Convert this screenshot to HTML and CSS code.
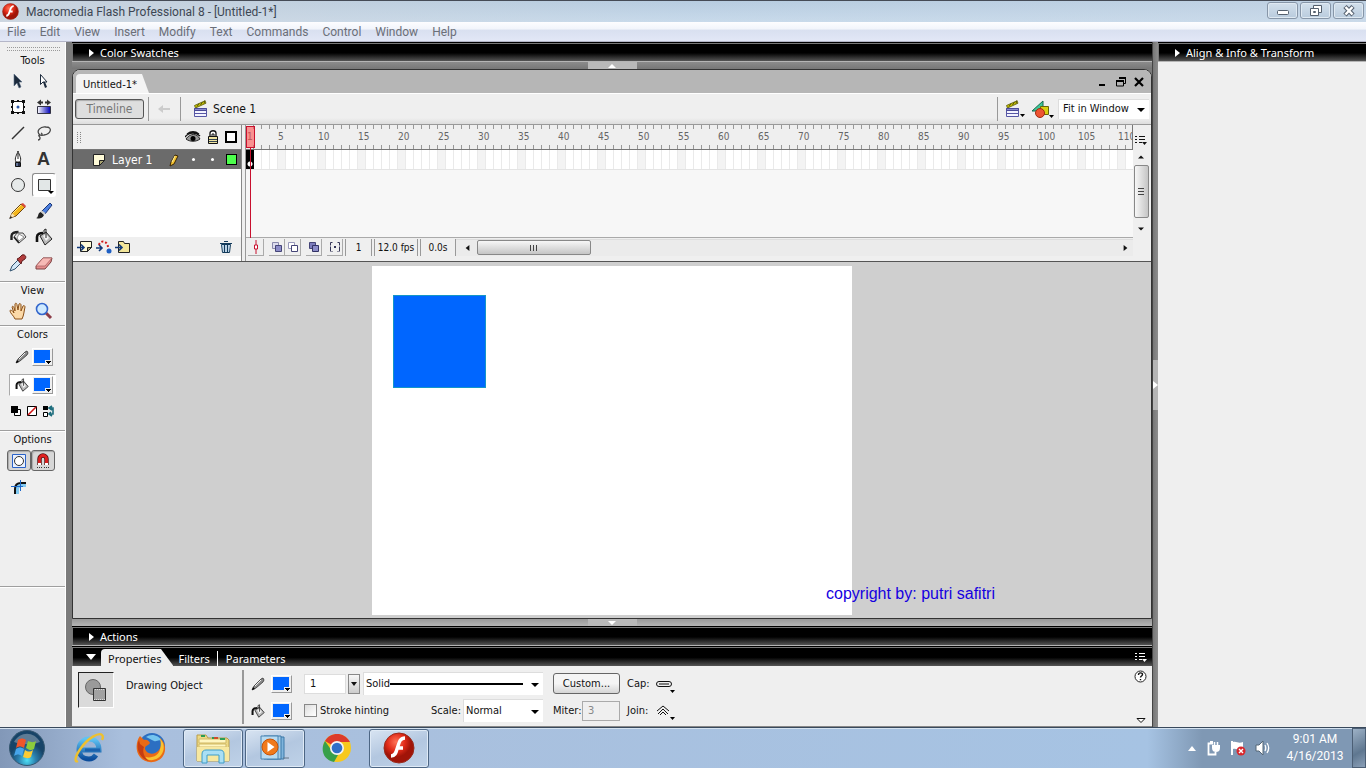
FILE: index.html
```html
<!DOCTYPE html>
<html lang="en">
<head>
	<meta charset="UTF-8">
	<meta name="viewport" content="width=device-width, initial-scale=1">
	<title>Macromedia Flash Professional 8 - [Untitled-1*]</title>
	<link rel="stylesheet" href="styles.css">
</head>
<body>

<!-- shared shapes -->
<svg class="defs" width="0" height="0" aria-hidden="true">
	<defs>
		<radialGradient id="gRed" cx="40%" cy="30%"><stop offset="0" stop-color="#ff7458"/><stop offset=".6" stop-color="#e02a18"/><stop offset="1" stop-color="#a01408"/></radialGradient>
		<radialGradient id="gOrb" cx="50%" cy="85%"><stop offset="0" stop-color="#4fe0f5"/><stop offset=".5" stop-color="#2a7fae"/><stop offset="1" stop-color="#174468"/></radialGradient>
		<linearGradient id="gBlue"><stop offset="0" stop-color="#fff"/><stop offset="1" stop-color="#0000b8"/></linearGradient>
		<linearGradient id="gIe" x2="0" y2="1"><stop offset="0" stop-color="#5fc4f4"/><stop offset="1" stop-color="#0c4d9c"/></linearGradient>
	</defs>
	<symbol id="flash" viewBox="0 0 32 32">
		<circle cx="16" cy="16" r="15" fill="url(#gRed)" stroke="#9a2a1c"/>
		<path d="M22 6c-6 0-6 6-8 11-1 4-2 7-6 7M13 16h7" fill="none" stroke="#fff" stroke-width="3.4"/>
	</symbol>
	<symbol id="pencil" viewBox="0 0 18 18">
		<path d="M1 16l2-5L12 2l4 3-9 9z" fill="#f3b51b" stroke="#6d4310"/>
		<path d="M12 2l2-1 3 3-1 2z" fill="#d94b3c"/>
		<path d="M1 16l2-5 3 3z" fill="#f7e2b5"/><path d="M0 17l2-3 1 2z" fill="#222"/>
		<path d="M4 11l8-8" stroke="#ffe88a"/>
	</symbol>
	<symbol id="greypencil" viewBox="0 0 14 14">
		<path d="M1 13l2-4 7-7 2-1 1 2-1 2-7 6z" fill="#8b8b8b" stroke="#333" stroke-width=".8"/><path d="M4 9l6-6" stroke="#eee"/><path d="M1 13l1-3 2 2z"/>
	</symbol>
	<symbol id="bucket" viewBox="0 0 18 18">
		<path d="M2 14V9c0-3 3-4 6-4" fill="none" stroke="#111" stroke-width="2.6"/>
		<path d="M5 8l6-4 6 7-7 6z" fill="#b9b9b9" stroke="#222"/>
		<path d="M8 8l3-2 3 4-3 3z" fill="#f2f2f2"/><path d="M11 10V1l-2 1v4" fill="none" stroke="#222"/>
	</symbol>
	<symbol id="clapper" viewBox="0 0 16 18">
		<path d="M1.500 5.500L12 .8l1 2.400L2.500 8z" fill="#c8c400" stroke="#55550a" stroke-width=".8"/>
		<path d="M4 6.500l2-3M7.500 5l2-3M11 3.500l1-3" stroke="#55550a"/>
		<path d="M1.500 8.500h12v8h-12z" fill="#f4f4ff" stroke="#5757a5"/>
		<path d="M1.500 8.500h12v2h-12z" fill="#8989cf" stroke="#4b4b97"/><path d="M2 13.500h11" stroke="#5757a5"/>
	</symbol>
	<symbol id="menu" viewBox="0 0 12 11">
		<path d="M0 1.500h2M4 1.500h6M0 4.500h2M4 4.500h6M0 7.500h2M4 7.500h3" stroke="currentColor"/><path d="M7 7h5l-2.500 3z" fill="currentColor"/>
	</symbol>
	<symbol id="page" viewBox="0 0 12 12">
		<path d="M.5.500h11v6l-5 5h-6z" fill="#fffbd8" stroke="#222"/><path d="M11.500 6.500h-5v5z" fill="#a9a472" stroke="#222"/>
	</symbol>
</svg>

<header class="titlebar">
	<svg class="app-icon" width="17" height="17"><use href="#flash"/></svg>
	<h1>Macromedia Flash Professional 8 - [Untitled-1*]</h1>
	<div class="win-buttons">
		<button aria-label="Minimize"><svg width="14" height="12"><rect x="1.500" y="5.500" width="11" height="4" rx="1" fill="#fff" stroke="#55606e"/></svg></button>
		<button aria-label="Restore"><svg width="14" height="12" fill="#fff" stroke="#55606e"><path d="M4.500.5h8v7h-8z"/><path d="M1.500 3.500h8v7h-8z"/><path d="M4.500 6.500h2v1h-2z"/></svg></button>
		<button aria-label="Close"><svg width="14" height="12"><path d="M3 1.500L11 10M11 1.500L3 10" stroke="#55606e" stroke-width="4.500"/><path d="M3.500 2L10.500 9.500M10.500 2L3.500 9.500" stroke="#fff" stroke-width="2.500"/></svg></button>
	</div>
</header>

<nav class="menubar">
	<a href="#">File</a>
	<a href="#">Edit</a>
	<a href="#">View</a>
	<a href="#">Insert</a>
	<a href="#">Modify</a>
	<a href="#">Text</a>
	<a href="#">Commands</a>
	<a href="#">Control</a>
	<a href="#">Window</a>
	<a href="#">Help</a>
</nav>

<div class="workspace">

	<!-- tools -->
	<aside class="tools">
		<div class="grip"></div>
		<section class="tool-group tool-main">
			<h2>Tools</h2>
			<div class="tool-grid">
				<button aria-label="Selection"><svg width="18" height="18"><path d="M5 2v12l3-3 2 5 2-1-2-5h3z" fill="#1c2a3c" stroke="#5b6f86" stroke-width=".6"/></svg></button>
				<button aria-label="Subselection"><svg width="18" height="18"><path d="M5.500 2.500v10l2.500-2.500h4z" fill="#fff" stroke="#1c2a3c"/><path d="M8 10l2 6 2-1-2-5z" fill="#1c2a3c"/></svg></button>
				<button aria-label="Free Transform"><svg width="18" height="18"><path d="M3.500 3.500h11v11h-11z" fill="#fff" stroke="#111"/><path d="M2 2h3v3H2zM13 2h3v3h-3zM2 13h3v3H2zM13 13h3v3h-3zM8 2h2v2H8zM8 14h2v2H8zM2 8h2v2H2zM14 8h2v2h-2z" fill="#111"/><circle cx="9" cy="9" r="1.500" fill="#2a56a8"/></svg></button>
				<button aria-label="Gradient Transform"><svg width="18" height="18"><path d="M2.500 8.500h13v7h-13z" fill="url(#gBlue)" stroke="#334"/><path d="M2 4.500l4-3v2h2v2H6v2zM16 4.500l-4-3v2h-2v2h2v2z" fill="#333"/></svg></button>
				<button aria-label="Line"><svg width="18" height="18"><path d="M3 15L15 3" stroke="#333" stroke-width="1.500"/></svg></button>
				<button aria-label="Lasso"><svg width="18" height="18"><path d="M5 11C0 7 6 2 11 3c7 0 5 7-2 8-3 1-6-1-5 1 2 2 1 4-1 4M5 11c2 1 3-1 1-2" fill="none" stroke="#444" stroke-width="1.300"/></svg></button>
				<button aria-label="Pen"><svg width="18" height="18"><path d="M9 1C8 5 5 8 7 12h4c2-4-1-7-2-11z" fill="#fff" stroke="#222"/><path d="M9 3v6" stroke="#222"/><path d="M6.500 12.500h5v4h-5z" fill="#26304a" stroke="#111"/><path d="M8 13v3" stroke="#9db4dd"/></svg></button>
				<button aria-label="Text" class="text-tool">A</button>
				<button aria-label="Oval"><svg width="18" height="18"><circle cx="9" cy="9" r="6.500" fill="#e6eaea" stroke="#333"/></svg></button>
				<button aria-label="Rectangle" class="active"><svg width="20" height="20"><path d="M4.500 4.500h12v11h-12z" fill="#e2e7e7" stroke="#333"/><path d="M14 16h6l-3 3z"/></svg></button>
				<button aria-label="Pencil"><svg width="18" height="18"><use href="#pencil"/></svg></button>
				<button aria-label="Brush"><svg width="18" height="18"><path d="M7 9l8-8 2 2-7 9z" fill="#4b7fe0" stroke="#1c3676"/><path d="M1 16c3 0 1-5 5-6l3 3c-2 4-5 4-8 3z" fill="#222"/><path d="M6 9l4 3" stroke="#ccc" stroke-width="2"/></svg></button>
				<button aria-label="Ink Bottle"><svg width="18" height="18"><path d="M2.500 12V8c0-3 3-4 7-4" fill="none" stroke="#222" stroke-width="2.400"/><path d="M5 9l3-4h6l3 4-7 6z" fill="#e9e9e9" stroke="#444"/><path d="M10 6l5 3-5 4-2-3z" fill="#fff" stroke="#777" stroke-width=".8"/><path d="M5 9l5 6" stroke="#222" stroke-width="1.800"/></svg></button>
				<button aria-label="Paint Bucket"><svg width="18" height="18"><use href="#bucket"/></svg></button>
				<button aria-label="Eyedropper"><svg width="18" height="18"><path d="M1 17l2-5 6-6 3 3-6 6z" fill="#d2e7f7" stroke="#31536f"/><path d="M8 5l2-1 3-3c3-1 5 2 3 4l-3 2-1 3z" fill="#b33d3d" stroke="#5f1b1b"/></svg></button>
				<button aria-label="Eraser"><svg width="18" height="18"><path d="M1 12l7-8h9l-1 4-6 7H1z" fill="#e58d8d" stroke="#7c4242"/><path d="M1 12h9l7-8H8z" fill="#f6b9b5" stroke="#a45b5b" stroke-width=".7"/></svg></button>
			</div>
		</section>
		<section class="tool-group">
			<h2>View</h2>
			<div class="tool-grid">
				<button aria-label="Hand"><svg width="18" height="18"><path d="M6 17c-1-3-5-6-5-8s3 0 4 2L3 5c1-2 2 0 3 4L6 2c1-2 2 0 2 1l1 5 1-6c1-1 2 0 2 1l0 6 2-5c1-1 2 0 2 1-1 4-1 8-3 12z" fill="#fbd9a8" stroke="#8a4f17"/></svg></button>
				<button aria-label="Zoom"><svg width="18" height="18"><path d="M10 10l6 6" stroke="#8c3c48" stroke-width="3"/><circle cx="7" cy="7" r="5.500" fill="#cfeaff" stroke="#3366cc" stroke-width="1.600"/></svg></button>
			</div>
		</section>
		<section class="tool-group tool-colors">
			<h2>Colors</h2>
			<div class="color-row"><svg width="14" height="14"><use href="#greypencil"/></svg><button class="swatch" aria-label="Stroke color"></button></div>
			<div class="color-row selected"><svg width="14" height="14"><use href="#bucket"/></svg><button class="swatch" aria-label="Fill color"></button></div>
			<div class="mini-row">
				<button aria-label="Black and white"><svg width="12" height="12"><path d="M4.500 4.500h6v6h-6z" fill="#fff" stroke="#000"/><path d="M1 1h7v7H1z"/></svg></button>
				<button aria-label="No color"><svg width="12" height="12"><path d="M1.500 1.500h9v9h-9z" fill="#fff" stroke="#000"/><path d="M2 10l8-8" stroke="#d01616" stroke-width="1.600"/></svg></button>
				<button aria-label="Swap colors"><svg width="14" height="12"><path d="M1 1h5v4H1z"/><path d="M1.500 7.500h4v4h-4z" fill="#fff" stroke="#000"/><path d="M7 3h4v6H8M10 1L7 3l3 2M9 7L7 9l3 2" fill="none" stroke="#1d6d7d" stroke-width="1.600"/></svg></button>
			</div>
		</section>
		<section class="tool-group tool-options">
			<h2>Options</h2>
			<div class="option-row">
				<button class="pressed" aria-label="Object Drawing"><svg width="16" height="16"><path d="M1.500 1.500h13v13h-13z" fill="#e8f0ff" stroke="#2a62c8"/><circle cx="8" cy="8" r="4.500" fill="#fff" stroke="#333"/></svg></button>
				<button class="pressed" aria-label="Snap to Objects"><svg width="16" height="16"><path d="M4.500 12V6a3.500 3.500 0 0 1 7 0v6" fill="none" stroke="#4c0d0d" stroke-width="4.400"/><path d="M4.500 10V6a3.500 3.500 0 0 1 7 0v4" fill="none" stroke="#e02020" stroke-width="2.800"/><path d="M3 11h3M10 11h3" stroke="#fff" stroke-width="2"/><path d="M2 14.500h5M9 14.500h5" stroke="#333" stroke-dasharray="1 1"/></svg></button>
			</div>
			<div class="option-row">
				<button aria-label="Round Rectangle Radius"><svg width="18" height="18"><path d="M5 16v-5c0-4 2-6 6-6h5v4h-5c-1 0-2 1-2 2v5z" fill="#7fc8f0"/><path d="M5 16v-5c0-4 2-6 6-6h5" fill="none" stroke="#111" stroke-width="2"/><path d="M1 8.500h12M10.500 2v11" stroke="#1c67c8"/></svg></button>
			</div>
		</section>
	</aside>

	<!-- document and bottom panels -->
	<main class="center">
		<div class="panel-bar"><button class="expander"><i class="tri-right"></i>Color Swatches</button></div>
		<div class="splitter"><button class="handle" aria-label="Collapse top panels"><i class="tri-up"></i></button></div>

		<div class="document">
			<div class="tabstrip">
				<a href="#" class="doc-tab">Untitled-1*</a>
				<div class="doc-buttons">
					<button aria-label="Minimize document"><svg width="10" height="10"><path d="M1 8h6" stroke="#000" stroke-width="2"/></svg></button>
					<button aria-label="Restore document"><svg width="10" height="10" fill="none" stroke="#000"><path d="M3 1h6.500v5.500H8M1 4h6.500v5H.5V4z"/><path d="M3 1h7M0 4h8" stroke-width="2"/></svg></button>
					<button aria-label="Close document"><svg width="10" height="10"><path d="M1 1l8 8M9 1L1 9" stroke="#000" stroke-width="2.200"/></svg></button>
				</div>
			</div>

			<div class="edit-bar">
				<button class="timeline-btn">Timeline</button>
				<span class="vline"></span>
				<button class="back" aria-label="Back"><svg width="14" height="10"><path d="M1 5l5-4v3h7v2H6v3z" fill="#ccc"/></svg></button>
				<span class="vline"></span>
				<a href="#" class="scene"><svg width="16" height="18"><use href="#clapper"/></svg>Scene 1</a>
				<span class="vline push"></span>
				<button class="drop" aria-label="Edit Scene"><svg width="20" height="18"><use href="#clapper" width="16" height="18"/><path d="M15 14h5l-2.500 3z"/></svg></button>
				<button class="drop" aria-label="Edit Symbols"><svg width="22" height="19"><path d="M0 11L11 1v10z" fill="#3fc79a" stroke="#176b4c"/><path d="M8.500 6.500h8v8h-8z" fill="#d8d010" stroke="#6a660a"/><circle cx="8" cy="13" r="4.500" fill="#ee5533" stroke="#a02a10"/><path d="M17 15h5l-2.500 3z"/></svg></button>
				<span class="select zoom"><select aria-label="Zoom"><option>Fit in Window</option><option>100%</option></select></span>
			</div>

			<div class="timeline">
				<div class="layers">
					<div class="layers-head">
						<span class="dots"></span>
						<svg width="16" height="12"><path d="M1 8c4-6 11-6 14 0-4 3-10 3-14 0z" fill="#999" stroke="#222"/><path d="M0 6c4-5 11-5 15-1M2 3c4-3 8-3 12 0" fill="none" stroke="#111" stroke-width="1.300"/><circle cx="8" cy="7.500" r="2.500"/></svg>
						<svg width="12" height="14"><path d="M3 7V3c0-3 6-3 6 0v4" fill="#fff" stroke="#111" stroke-width="1.300"/><path d="M5 7V4h2v3" fill="none" stroke="#111"/><path d="M1.500 6.500h9v7h-9z" fill="#f0e4a0" stroke="#111"/><path d="M2 9.500h8M2 11.500h8" stroke="#345"/></svg>
						<svg width="12" height="12"><path d="M1 1h10v10H1z" fill="#fff" stroke="#000" stroke-width="2"/></svg>
					</div>
					<div class="layer">
						<svg width="12" height="12"><use href="#page"/></svg>
						<span class="layer-name">Layer 1</span>
						<svg width="12" height="14"><path d="M2 13l1-4 4-7 3 1-4 8z" fill="#f3c233" stroke="#3a2606"/><path d="M4 9l3-6" stroke="#fff2a8"/></svg>
						<b class="dot"></b>
						<b class="dot"></b>
						<span class="outline-color"></span>
					</div>
					<div class="layers-foot">
						<button aria-label="Insert Layer"><svg width="16" height="14"><path d="M3.500 1.500h11v6l-4 4h-7z" fill="#fffbd8" stroke="#222"/><path d="M14.500 7.500h-4v4z" fill="#a9a472" stroke="#222"/><path d="M0 7.500h7M4 4.500l3 3-3 3" fill="none" stroke="#123a7a" stroke-width="1.600"/></svg></button>
						<button aria-label="Add Motion Guide"><svg width="16" height="14"><path d="M3 5c1-5 8-5 9 2" fill="none" stroke="#d01818" stroke-width="2" stroke-dasharray="2 2"/><path d="M0 8h6M3 5l3 3-3 3" fill="none" stroke="#123a7a" stroke-width="1.600"/><circle cx="13" cy="11" r="2.500" fill="#1d5fc4"/></svg></button>
						<button aria-label="Insert Layer Folder"><svg width="16" height="14"><path d="M3.500 1.500h5l1 2h5v9h-11z" fill="#f3e69a" stroke="#222"/><path d="M0 7.500h7M4 4.500l3 3-3 3" fill="none" stroke="#123a7a" stroke-width="1.600"/></svg></button>
						<button class="push" aria-label="Delete Layer"><svg width="12" height="14"><path d="M1.500 4.500h9l-1 8h-7z" fill="#cfe4f5" stroke="#123a5a"/><path d="M0 3.500h12M4 1.500h4M4.500 5v7M7.500 5v7" stroke="#123a5a" stroke-width="1.200"/></svg></button>
					</div>
				</div>

				<div class="frames">
					<div class="playhead"></div>
					<ol class="ruler">
						<li class="first">1</li><li>5</li><li>10</li><li>15</li><li>20</li><li>25</li><li>30</li><li>35</li>
						<li>40</li><li>45</li><li>50</li><li>55</li><li>60</li><li>65</li><li>70</li><li>75</li>
						<li>80</li><li>85</li><li>90</li><li>95</li><li>100</li><li>105</li><li>110</li>
					</ol>
					<div class="frame-row"><span class="keyframe"></span></div>
					<div class="frames-empty"></div>
					<div class="frames-foot">
						<button class="tick" aria-label="Center Frame"><svg width="8" height="14"><path d="M4 0v14" stroke="#c8102e"/><path d="M2.500 5h3v4h-3z" fill="#fff" stroke="#c8102e"/></svg></button>
						<button class="onion" aria-label="Onion Skin"><svg width="12" height="12"><path d="M1.500 1.500h6v6h-6z" fill="#dde" stroke="#88a"/><path d="M4.500 4.500h6v6h-6z" fill="#8c8cc8" stroke="#447"/></svg></button>
						<button aria-label="Onion Skin Outlines"><svg width="12" height="12"><path d="M1.500 1.500h6v6h-6z" fill="#fff" stroke="#99b"/><path d="M4.500 4.500h6v6h-6z" fill="#fff" stroke="#447"/></svg></button>
						<button class="multi" aria-label="Edit Multiple Frames"><svg width="12" height="12"><path d="M1.500 1.500h6v6h-6z" fill="#7c7cbc" stroke="#447"/><path d="M4.500 4.500h6v6h-6z" fill="#8c8cc8" stroke="#336"/></svg></button>
						<button class="markers" aria-label="Modify Onion Markers"><svg width="12" height="12"><path d="M3.500 1.500h-2v9h2M8.500 1.500h2v9h-2" fill="none" stroke="#335" stroke-dasharray="5 1"/><path d="M5 5h2v2H5z" fill="#335"/></svg></button>
						<output class="f-num">1</output>
						<output class="f-fps">12.0 fps</output>
						<output class="f-time">0.0s</output>
						<div class="hscroll">
							<button aria-label="Scroll left"><i class="tri-left"></i></button>
							<button class="thumb" aria-label="Timeline scroll"><i class="ridges"></i></button>
							<button class="push" aria-label="Scroll right"><i class="tri-right"></i></button>
						</div>
					</div>
				</div>

				<div class="vscroll">
					<button class="frame-menu" aria-label="Frame View"><svg width="12" height="11"><use href="#menu"/></svg></button>
					<button aria-label="Scroll up"><i class="tri-up"></i></button>
					<button class="thumb" aria-label="Layer scroll"><i class="ridges"></i></button>
					<button aria-label="Scroll down"><i class="tri-down"></i></button>
				</div>
			</div>

			<div class="stage-area">
				<div class="stage">
					<div class="shape"></div>
					<p class="credit">copyright by: putri safitri</p>
				</div>
			</div>
		</div>

		<div class="splitter bottom"><button class="handle" aria-label="Collapse bottom panels"><i class="tri-down"></i></button></div>
		<div class="panel-bar"><button class="expander"><i class="tri-right"></i>Actions</button></div>
		<div class="panel-bar tabs">
			<button class="expander" aria-label="Collapse Properties"><i class="tri-down"></i></button>
			<a href="#" class="prop-tab">Properties</a>
			<a href="#">Filters</a>
			<a href="#" class="sep">Parameters</a>
			<button class="bar-menu" aria-label="Panel menu"><svg width="12" height="11"><use href="#menu"/></svg></button>
		</div>

		<section class="properties">
			<div class="object-icon"><svg width="28" height="28"><circle cx="10" cy="10" r="7.500" fill="#9a9a9a" stroke="#666"/><path d="M10.500 11.500h12v12h-12z" fill="#ddd" stroke="#333"/><path d="M11 13h11M11 15h11M11 17h11M11 19h11M11 21h11" stroke="#666" stroke-dasharray="1 1"/><path d="M12 14h10M12 16h10M12 18h10M12 20h10M12 22h10" stroke="#666" stroke-dasharray="1 1"/></svg></div>
			<p class="object-name">Drawing Object</p>
			<div class="prop-grid">
				<svg width="14" height="14"><use href="#greypencil"/></svg>
				<button class="swatch" aria-label="Stroke color"></button>
				<div class="field-row">
					<input class="stroke-h" type="text" value="1" aria-label="Stroke height">
					<button class="spin" aria-label="Stroke height slider"><i class="tri-down"></i></button>
					<span class="select line-style"><select aria-label="Stroke style"><option>Solid</option><option>Dashed</option></select></span>
				</div>
				<button class="custom">Custom...</button>
				<div class="cap"><span>Cap:</span><button aria-label="Cap style"><svg width="20" height="18"><rect x=".5" y="6.500" width="15" height="5" rx="2.500" fill="none" stroke="#111"/><path d="M3 9h10" stroke="#111"/><path d="M14 15h5l-2.500 3z"/></svg></button></div>

				<svg width="14" height="14"><use href="#bucket"/></svg>
				<button class="swatch" aria-label="Fill color"></button>
				<div class="field-row">
					<label class="hint"><input type="checkbox">Stroke hinting</label>
					<label class="push" for="scale">Scale:</label>
					<span class="select scale"><select id="scale"><option>Normal</option><option>None</option></select></span>
				</div>
				<div class="miter"><label for="miter">Miter:</label><input id="miter" type="text" value="3" disabled></div>
				<div class="cap"><span>Join:</span><button aria-label="Join style"><svg width="20" height="18"><path d="M1 9l6-5 6 5M2 12l5-5 5 5M4 13l3-3 3 3" fill="none" stroke="#111"/><path d="M14 15h5l-2.500 3z"/></svg></button></div>
			</div>
			<div class="prop-side">
				<button aria-label="Help"><svg width="13" height="13"><circle cx="6.500" cy="6.500" r="5.500" fill="#fff" stroke="#222"/><path d="M4.500 5c0-3 4-2.500 4-.5 0 1.500-2 1.500-2 3M6.500 9v1.300" fill="none" stroke="#111" stroke-width="1.400"/></svg></button>
				<button aria-label="Collapse information area"><svg width="10" height="6"><path d="M1 .5h8L5 4.500z" fill="#fff" stroke="#111"/></svg></button>
			</div>
		</section>
	</main>

	<div class="vsplitter"><button class="handle" aria-label="Collapse side panels"><i class="tri-right"></i></button></div>

	<aside class="dock">
		<div class="panel-bar"><button class="expander"><i class="tri-right"></i>Align &amp; Info &amp; Transform</button></div>
	</aside>
</div>

<footer class="taskbar">
	<button class="start" aria-label="Start"><svg width="38" height="38" viewBox="0 0 38 38"><circle cx="19" cy="19" r="17.500" fill="url(#gOrb)" stroke="#34566f"/><path d="M6 13c6-11 20-11 26 0-8 3-18 3-26 0z" fill="#fff" opacity=".3"/><path d="M10 11c3-2 5-2 8 0l-2 8c-3-2-5-2-8 0z" fill="#f0562a"/><path d="M20 12c3 1 5 2 8 0l-2 8c-3 2-5 1-8-1z" fill="#8ccc3c"/><path d="M8 20c3-2 5-2 8 0l-2 7c-3-2-5-2-8 0z" fill="#47a5ea"/><path d="M17 21c3 2 5 2 8 0l-2 7c-3 2-5 1-8 0z" fill="#fbcb34"/></svg></button>
	<button class="task" aria-label="Internet Explorer"><svg width="32" height="32" viewBox="0 0 32 32"><path d="M23 23c-2 3-4 4-7 4-6 0-10-4-10-10S11 7 16 7c6 0 10 4 10 11H8" fill="none" stroke="url(#gIe)" stroke-width="5"/><path d="M12 18h15" stroke="#1b62ae" stroke-width="3"/><path d="M5 29c-4 2-3-5 3-13C15 6 26 0 29 3c1 1 1 3 0 5" fill="none" stroke="#eec02f" stroke-width="2.400"/></svg></button>
	<button class="task" aria-label="Firefox"><svg width="32" height="32" viewBox="0 0 32 32"><circle cx="17" cy="14" r="13" fill="#2c6fc2"/><path d="M11 5c5-4 13-2 16 4-4-2-5 1-8 0s-5-3-8-4z" fill="#74c5ef"/><path d="M5 4l4 4c3-1 5 1 6 3-2 3-5 2-5 6 2 6 10 6 14 1 3-4 2-9 1-12 5 4 7 12 3 18-5 8-18 8-23 1C0 19 1 9 5 4z" fill="#ea6a16"/><path d="M28 11c2 5 0 12-5 15-6 4-13 2-17-3 7 5 18 2 19-6 1-2 1-7 0-11z" fill="#f9c330"/><path d="M4 8c-4 8 1 19 10 21-5-4-7-9-5-14l-4-3z" fill="#c53d12"/></svg></button>
	<button class="task open" aria-label="Windows Explorer"><svg width="34" height="32" viewBox="0 0 34 32"><path d="M1 3h9l2 3h19l2 2v21H1z" fill="#edd985" stroke="#b89d4a"/><path d="M3 7h27v4H3zM3 12h27v3H3z" fill="#fff6c0" stroke="#d1b967"/><path d="M5 4h4M16 6h4M24 7h5" stroke="#2b9d54" stroke-width="2"/><path d="M18 6h4" stroke="#d04b2c" stroke-width="2"/><path d="M1 15h32v14H1z" fill="#f7e8a0"/><path d="M6 31V22c0-3 2-4 4-4h14c3 0 4 2 4 4v9h-5v-8H11v8z" fill="#a9dff4" stroke="#3e9dc8"/></svg></button>
	<button class="task open" aria-label="Windows Media Player"><svg width="32" height="28" viewBox="0 0 32 28"><path d="M8 3h17v22H8z" fill="#7fb4dc" stroke="#3c79a8"/><path d="M5 2h17v23H5z" fill="#a4cdea" stroke="#3c79a8"/><path d="M2 2h17v23H2z" fill="#b9dbf1" stroke="#4684b4"/><path d="M24 24h6" stroke="#678"/><circle cx="11" cy="13" r="8" fill="#f07a1c" stroke="#c4530a"/><path d="M8.500 8l7 5-7 5z" fill="#fff"/></svg></button>
	<button class="task" aria-label="Google Chrome"><svg width="30" height="30" viewBox="0 0 30 30"><circle cx="15" cy="15" r="14" fill="#f7c91d"/><path d="M15 15L3 8c5-9 19-10 25 1H15z" fill="#dd3b2b"/><path d="M3 8l7 10 6 4-4 7C1 27-2 16 3 8z" fill="#37a04b"/><circle cx="15" cy="15" r="7" fill="#f3f3f3"/><circle cx="15" cy="15" r="5.300" fill="#2f6fc8"/></svg></button>
	<button class="task open" aria-label="Flash"><svg width="32" height="32"><use href="#flash"/></svg></button>
	<div class="tray">
		<button aria-label="Show hidden icons"><svg width="8" height="5"><path d="M4 0l4 5H0z" fill="#fff"/></svg></button>
		<button aria-label="Power"><svg width="16" height="16"><path d="M8 3.500H3.500v11h7V12M5 2h3" fill="none" stroke="#fff" stroke-width="1.800"/><path d="M7 5h8v3c0 3-2 4-4 4S7 11 7 8z" fill="#fff"/><path d="M9.500 2v4M12.500 2v4" stroke="#fff" stroke-width="1.500"/></svg></button>
		<button aria-label="Action Center"><svg width="16" height="16"><path d="M2 1v14" stroke="#fff" stroke-width="2"/><path d="M3 2c4-1 5 2 10 0v7c-5 2-6-1-10 0z" fill="#fff"/><circle cx="11" cy="11" r="4.500" fill="#d8272c"/><path d="M9 9l4 4M13 9l-4 4" stroke="#fff" stroke-width="1.400"/></svg></button>
		<button aria-label="Volume"><svg width="16" height="16"><path d="M1 5h3l4-4v14l-4-4H1z" fill="#fff" stroke="#567"/><path d="M10 5c1 2 1 4 0 6M12 3c2 3 2 7 0 10" fill="none" stroke="#fff" stroke-width="1.300"/></svg></button>
		<time datetime="2013-04-16T09:01">9:01 AM<br>4/16/2013</time>
		<button class="show-desktop" aria-label="Show desktop"></button>
	</div>
</footer>

</body>
</html>
```
FILE: styles.css
```css
* {
	box-sizing: border-box;
}

html, body {
	height: 100%;
	margin: 0;
	overflow: hidden;
}

body {
	display: flex;
	flex-direction: column;
	background: #efefef;
	color: #111;
	font: 11px/14px "DejaVu Sans Condensed", "Noto Sans", sans-serif;
}

button, input, select {
	font: inherit;
	color: inherit;
	margin: 0;
	padding: 0;
	border: 0;
	background: none;
}

h1, h2, p, ol {
	margin: 0;
	padding: 0;
	font-weight: normal;
}

a {
	color: inherit;
	text-decoration: none;
}

svg {
	display: block;
	flex: none;
}

.defs {
	position: absolute;
}

.push {
	margin-left: auto;
}

/* little arrows */
.tri-right, .tri-left, .tri-up, .tri-down {
	display: block;
	width: 0;
	height: 0;
	border: 0 solid transparent;
}

.tri-right {
	border-width: 4px 0 4px 5px;
	border-left-color: currentColor;
}

.tri-left {
	border-width: 4px 5px 4px 0;
	border-right-color: currentColor;
}

.tri-up {
	border-width: 0 4px 4px 4px;
	border-bottom-color: currentColor;
}

.tri-down {
	border-width: 4px 4px 0 4px;
	border-top-color: currentColor;
}

/* title bar */
.titlebar {
	display: flex;
	align-items: center;
	flex: none;
	height: 22px;
	padding-left: 2px;
	border-top: 1px solid #454b56;
	background: linear-gradient(90deg, rgba(205, 213, 222, .8), rgba(190, 214, 234, .3) 50%, rgba(200, 216, 232, .6)), linear-gradient(#b4c8dc, #cddceb);
}

.titlebar h1 {
	margin-left: 7px;
	color: #3d4753;
	font: 12px/18px Roboto, "Noto Sans", sans-serif;
}

.win-buttons {
	display: flex;
	align-self: flex-start;
	gap: 2px;
	margin: 1px 2px 0 auto;
}

.win-buttons button {
	display: flex;
	align-items: center;
	justify-content: center;
	width: 31px;
	height: 17px;
	border: 1px solid #8796a8;
	border-radius: 3px;
	background: linear-gradient(#d3e0ec, #b9cbdd);
	box-shadow: inset 0 0 0 1px #dfe9f2;
}

.menubar {
	display: flex;
	align-items: center;
	flex: none;
	gap: 14px;
	height: 20px;
	padding-left: 7px;
	border-bottom: 1px solid #b4b6c8;
	background: linear-gradient(#fdfdff, #f2f5fb 35%, #d9e0f0 45%, #e2e7f6);
	color: #6b6f78;
	font: 12px/18px Roboto, "Noto Sans", sans-serif;
}

.workspace {
	display: flex;
	flex: 1;
	min-height: 0;
	background: #7b7b7b;
}

/* tools */
.tools {
	flex: none;
	width: 66px;
	padding-top: 5px;
	margin-right: 6px;
	border-right: 1px solid #fff;
	background: #efefef;
}

.grip {
	height: 5px;
	margin: 0 5px 0 7px;
	background: repeating-linear-gradient(90deg, #999 0 1px, transparent 1px 2px) 0 0 / 100% 1px no-repeat,
		repeating-linear-gradient(90deg, #999 0 1px, transparent 1px 2px) 0 3px / 100% 1px no-repeat;
}

.tool-group {
	padding: 2px 0 1px;
	border-bottom: 1px solid #9f9f9f;
	box-shadow: 0 1px 0 #fff;
}

.tool-main {
	padding-bottom: 5px;
}

.tool-group h2 {
	font-size: 11px;
	line-height: 14px;
	text-align: center;
}

.tool-grid {
	display: grid;
	grid-template-columns: 26px 26px;
	grid-auto-rows: 26px;
	justify-content: center;
	padding-right: 4px;
}

.tool-grid button, .mini-row button, .option-row button {
	display: flex;
	align-items: center;
	justify-content: center;
}

.tool-grid .active {
	margin: 1px;
	border: 1px solid;
	border-color: #8b8b8b #fff #fff #8b8b8b;
	border-radius: 3px;
	background: #fff;
}

.tool-grid .text-tool {
	color: #333;
	font: bold 18px/20px "Liberation Sans", sans-serif;
}

.color-row {
	display: flex;
	align-items: center;
	gap: 3px;
	height: 22px;
	margin: 4px 9px 6px;
	padding-left: 6px;
}

.color-row.selected {
	border: 1px solid;
	border-color: #aaa #fff #fff #aaa;
	background: #fff;
	padding-left: 5px;
}

.swatch {
	position: relative;
	width: 21px;
	height: 18px;
	border: 1px solid;
	border-color: #fff #999 #999 #fff;
	background: linear-gradient(#0066ff, #0066ff) 1px 1px / 16px 13px no-repeat #efefef;
}

.swatch::after {
	content: "";
	position: absolute;
	right: 0;
	bottom: 0;
	width: 7px;
	height: 5px;
	background: linear-gradient(#000, #000) 1px 1px / 5px 1px no-repeat,
		linear-gradient(#000, #000) 2px 2px / 3px 1px no-repeat,
		linear-gradient(#000, #000) 3px 3px / 1px 1px no-repeat #efefef;
}

.mini-row {
	display: flex;
	gap: 4px;
	justify-content: center;
	padding: 3px 0 12px;
}

.option-row {
	display: flex;
	height: 21px;
	margin: 3px 7px 5px;
}

.option-row button {
	width: 24px;
}

.option-row .pressed {
	border: 1px solid #666;
	border-radius: 3px;
	background: #d7d7d7;
	box-shadow: inset 1px 1px 1px #aaa;
}

.tool-options {
	padding-bottom: 84px;
}

/* black panel bars */
.center {
	display: flex;
	flex: 1;
	flex-direction: column;
	min-width: 0;
}

.panel-bar {
	display: flex;
	align-items: center;
	flex: none;
	height: 20px;
	padding-top: 1px;
	border-bottom: 1px solid #b5b5b5;
	border-top: 1px solid #000;
	background: linear-gradient(#000 55%, #555);
	box-shadow: inset 1px 1px 0 #777;
	color: #fff;
	font-family: "Noto Sans", sans-serif;
}

.expander {
	display: flex;
	align-items: center;
	gap: 6px;
	padding-left: 17px;
}

.dock {
	flex: none;
	width: 208px;
	background: #efefef;
}

.splitter {
	display: flex;
	justify-content: center;
	flex: none;
	height: 7px;
	background: linear-gradient(#8b8b8b, #777);
}

.splitter.bottom {
	background: linear-gradient(#999, #b5b5b5);
}

.splitter .handle {
	display: flex;
	align-items: center;
	justify-content: center;
	width: 49px;
	background: #b9b9b9;
	color: #fff;
}

.vsplitter {
	display: flex;
	align-items: center;
	flex: none;
	width: 6px;
	border-left: 1px solid #444;
	background: linear-gradient(90deg, #777, #8d8d8d);
}

.vsplitter .handle {
	width: 5px;
	height: 50px;
	background: #b5b5b5;
	color: #fff;
}

/* document window */
.document {
	display: flex;
	flex: 1;
	flex-direction: column;
	min-height: 0;
	border: 1px solid #333;
	border-radius: 8px 8px 0 0;
	background: #efefef;
	overflow: hidden;
}

.tabstrip {
	display: flex;
	align-items: flex-end;
	flex: none;
	height: 24px;
	padding: 0 7px 0 3px;
	border-bottom: 1px solid #fff;
	background: #b6b6b6;
}

.doc-tab {
	height: 19px;
	padding: 4px 12px 0 7px;
	border-radius: 4px 0 0 0;
	background: #f4f4f4;
	clip-path: polygon(0 0, 66px 0, 100% 100%, 0 100%);
}

.doc-buttons {
	display: flex;
	align-self: center;
	gap: 8px;
	margin-left: auto;
}

.edit-bar {
	display: flex;
	align-items: center;
	flex: none;
	height: 31px;
	padding: 0 2px 0 2px;
	border-bottom: 1px solid #999;
	background: linear-gradient(#efefef 80%, #ddd);
	font: 12px/16px "DejaVu Sans Condensed", "Noto Sans", sans-serif;
}

.timeline-btn {
	width: 69px;
	height: 20px;
	border: 1px solid #555;
	border-radius: 3px;
	background: #dedede;
	box-shadow: inset 1px 1px 1px #aaa;
	color: #777;
}

.vline {
	width: 1px;
	height: 24px;
	background: #999;
}

.timeline-btn + .vline {
	margin-left: 4px;
}

.back {
	padding: 0 9px 0 8px;
}

.scene {
	display: flex;
	align-items: center;
	gap: 4px;
	margin-left: 12px;
}

.vline.push {
	margin-left: auto;
}

.drop {
	margin-left: 7px;
}

.select {
	position: relative;
	display: flex;
	background: #fff;
	box-shadow: inset 1px 1px 0 #ddd;
}

.select select {
	width: 100%;
	padding: 0 16px 0 3px;
	appearance: none;
}

.select::after {
	content: "";
	position: absolute;
	top: calc(50% - 1px);
	right: 4px;
	border: 4px solid transparent;
	border-top-color: #000;
	border-bottom-width: 0;
	pointer-events: none;
}

.select.zoom {
	width: 91px;
	height: 20px;
	margin-left: 4px;
	font-size: 11px;
}

.zoom select {
	padding-left: 5px;
}

/* timeline */
.timeline {
	display: flex;
	flex: none;
	height: 137px;
	border-bottom: 1px solid #555;
	background: #efefef;
}

.layers {
	display: flex;
	flex: none;
	flex-direction: column;
	width: 169px;
	border-right: 1px solid #888;
	background: #fff;
}

.layers-head {
	display: flex;
	align-items: center;
	gap: 6px;
	height: 25px;
	padding-right: 4px;
	border-bottom: 1px solid #777;
	background: #efefef;
}

.dots {
	width: 4px;
	height: 11px;
	margin: 0 auto 0 4px;
	background: repeating-linear-gradient(#888 0 1px, transparent 1px 2px) 0 0 / 1px 100% no-repeat,
		repeating-linear-gradient(#888 0 1px, transparent 1px 2px) 3px 0 / 1px 100% no-repeat;
}

.layer {
	display: flex;
	align-items: center;
	height: 19px;
	padding: 0 4px 0 20px;
	background: #6b6b6b;
	color: #fff;
	font-size: 12px;
}

.layer-name {
	margin: 0 auto 0 7px;
}

.dot {
	width: 3px;
	height: 3px;
	margin: 0 4px 0 12px;
	border-radius: 2px;
	background: #fff;
}

.outline-color {
	width: 11px;
	height: 11px;
	margin-left: 8px;
	border: 1px solid #000;
	background: #4dff4d;
}

.layers-foot {
	display: flex;
	align-items: center;
	gap: 3px;
	height: 19px;
	margin-top: auto;
	margin-bottom: 5px;
	padding: 0 9px 0 4px;
	background: #efefef;
}

.frames {
	position: relative;
	display: flex;
	flex: 1;
	flex-direction: column;
	min-width: 0;
	margin-left: 3px;
	border-left: 1px solid #999;
}

.playhead {
	position: absolute;
	z-index: 1;
	top: 1px;
	left: 0;
	width: 9px;
	height: 22px;
	border: 1px solid #c8102e;
	background: rgba(255, 80, 80, .6);
}

.playhead::after {
	content: "";
	position: absolute;
	top: 21px;
	left: 3px;
	width: 1px;
	height: 90px;
	background: #c8102e;
}

.ruler {
	display: flex;
	flex: none;
	height: 25px;
	overflow: hidden;
	border-bottom: 1px solid #777;
	border-right: 1px solid #777;
	background:
		repeating-linear-gradient(90deg, transparent 0 7px, #999 7px 8px) 0 0 / 100% 4px no-repeat,
		repeating-linear-gradient(90deg, transparent 0 7px, #999 7px 8px) 0 20px / 100% 4px no-repeat,
		#efefef;
	color: #666;
	font-size: 10px;
	line-height: 23px;
	list-style: none;
}

.ruler li {
	flex: none;
	width: 40px;
}

.ruler .first {
	width: 32px;
	text-indent: 1px;
}

.frame-row {
	flex: none;
	height: 20px;
	border-bottom: 1px solid #e4e4e4;
	background:
		repeating-linear-gradient(90deg, transparent 0 7px, #eaeaea 7px 8px),
		repeating-linear-gradient(90deg, #fff 0 32px, #f3f3f3 32px 40px);
}

.keyframe {
	display: block;
	width: 8px;
	height: 19px;
	background: radial-gradient(circle at 4px 14px, #fff 2px, #000 3px);
}

.frames-empty {
	flex: 1;
	background: #f7f7f7;
}

.frames-foot {
	display: flex;
	align-items: center;
	flex: none;
	height: 19px;
	margin-bottom: 5px;
	border-top: 1px solid #aaa;
}

.frames-foot > button {
	display: flex;
	align-items: center;
	justify-content: center;
	width: 16px;
	height: 17px;
	border-right: 1px solid #aaa;
	border-bottom: 1px solid #aaa;
}

.frames-foot .tick {
	margin-left: 2px;
}

.frames-foot .onion {
	margin-left: 5px;
}

.frames-foot .multi, .frames-foot .markers {
	margin-left: 5px;
}

.frames-foot output {
	height: 17px;
	margin-left: 2px;
	border-right: 1px solid #999;
	border-left: 1px solid #999;
	font-size: 10px;
	line-height: 17px;
	text-align: center;
}

.f-num {
	width: 27px;
}

.f-fps {
	width: 44px;
}

.f-time {
	width: 36px;
}

.hscroll {
	display: flex;
	align-items: center;
	flex: 1;
	height: 17px;
	padding: 0 5px 0 9px;
	border-top: 1px solid #ddd;
	background: #ebebeb;
}

.thumb {
	display: flex;
	align-items: center;
	justify-content: center;
	border: 1px solid #888;
	border-radius: 2px;
}

.hscroll .thumb {
	width: 114px;
	height: 15px;
	margin-left: 7px;
	background: linear-gradient(#f7f7f7, #c5c5c5);
}

.ridges {
	width: 8px;
	height: 6px;
	background: repeating-linear-gradient(90deg, #444 0 1px, transparent 1px 3px);
}

.hscroll .tri-left, .hscroll .tri-right, .vscroll .tri-up, .vscroll .tri-down {
	transform: scale(.75);
}

.vscroll {
	display: flex;
	align-items: center;
	flex: none;
	flex-direction: column;
	width: 18px;
	padding-right: 2px;
}

.frame-menu {
	height: 30px;
}

.vscroll .thumb {
	width: 15px;
	height: 53px;
	margin: 6px 0 9px;
	background: linear-gradient(90deg, #f7f7f7, #c5c5c5);
}

.vscroll .ridges {
	width: 6px;
	height: 8px;
	background: repeating-linear-gradient(#444 0 1px, transparent 1px 3px);
}

/* stage */
.stage-area {
	display: flex;
	justify-content: center;
	flex: 1;
	min-height: 0;
	padding: 4px 0 3px;
	background: #cfcfcf;
}

.stage {
	position: relative;
	width: 480px;
	background: #fff;
}

.shape {
	position: absolute;
	top: 29px;
	left: 21px;
	width: 93px;
	height: 93px;
	border: 1px solid #1496c8;
	background: #0066ff;
}

.credit {
	position: absolute;
	top: 319px;
	left: 454px;
	color: #1500e0;
	font: 16px/18px "Liberation Sans", sans-serif;
	white-space: nowrap;
}

/* properties */
.tabs {
	align-items: stretch;
	height: 21px;
	margin-bottom: -1px;
}

.tabs .expander {
	width: 29px;
	padding-left: 14px;
	color: #fff;
}

.tabs .tri-down, .expander .tri-down {
	border-width: 6px 5px 0 5px;
}

.tabs a {
	align-self: flex-end;
	line-height: 15px;
}

.tabs .prop-tab {
	padding: 2px 12px 0 7px;
	margin-right: 5px;
	border-radius: 4px 0 0 0;
	background: #efefef;
	clip-path: polygon(0 0, 60px 0, 100% 100%, 0 100%);
	color: #111;
}

.tabs .sep {
	margin-left: 7px;
	padding-left: 8px;
	border-left: 1px solid #fff;
}

.bar-menu {
	margin: 0 5px 0 auto;
}

.properties {
	display: flex;
	flex: none;
	height: 61px;
	padding: 4px 5px 2px 6px;
	border-bottom: 1px solid #888;
	background: #efefef;
}

.object-icon {
	width: 36px;
	height: 36px;
	margin-top: 2px;
	padding: 4px;
	border: 1px solid;
	border-color: #222 #fff #fff #222;
	background: #dadada;
}

.object-name {
	width: 129px;
	padding: 9px 0 0 12px;
	border-right: 1px solid #999;
	box-shadow: 1px 0 0 #999;
}

.prop-grid {
	display: grid;
	grid-template-columns: 20px 33px 249px 74px auto;
	grid-template-rows: 27px 27px;
	align-items: center;
	padding-left: 8px;
}

.field-row, .miter, .cap {
	display: flex;
	align-items: center;
	white-space: nowrap;
}

.field-row {
	width: 239px;
}

.prop-grid input[type="text"] {
	height: 20px;
	padding-left: 5px;
	border: 1px solid #ddd;
	background: #fff;
}

.prop-grid .stroke-h {
	width: 42px;
}

.spin {
	display: flex;
	align-items: center;
	justify-content: center;
	width: 12px;
	height: 20px;
	margin: 0 3px 0 2px;
	border: 1px solid #888;
	background: linear-gradient(#f7f7f7, #ccc);
}

.spin .tri-down {
	border-width: 4px 3px 0 3px;
}

.line-style {
	flex: 1;
	height: 23px;
}

.line-style::before {
	content: "";
	position: absolute;
	top: 11px;
	right: 20px;
	left: 27px;
	height: 2px;
	background: #000;
	pointer-events: none;
}

.hint {
	display: flex;
	align-items: center;
	gap: 3px;
}

.hint input {
	width: 13px;
	height: 13px;
	border: 1px solid #888;
	background: linear-gradient(135deg, #ddd, #fff);
	appearance: none;
}

.select.scale {
	width: 80px;
	height: 23px;
	margin-left: 2px;
}

.custom {
	width: 67px;
	height: 21px;
	border: 1px solid #666;
	border-radius: 3px;
	background: linear-gradient(#f5f5f5 50%, #d5d5d5);
}

.miter {
	justify-content: space-between;
	width: 67px;
}

.prop-grid .miter input {
	width: 38px;
	border: 1px solid #aaa;
	background: #efefef;
	color: #888;
}

.cap {
	gap: 5px;
}

.cap span {
	width: 24px;
}

.prop-side {
	display: flex;
	flex-direction: column;
	align-items: center;
	justify-content: space-between;
	margin-left: auto;
}

/* taskbar */
.taskbar {
	display: flex;
	align-items: center;
	flex: none;
	height: 41px;
	padding-left: 8px;
	border-top: 1px solid #39495c;
	background: linear-gradient(90deg, #8298b8, #a9bfdd 9%, #a9c0de 30%, #a6c3e3 84%, #7f98b4 88%, #7f98b4);
	box-shadow: inset 0 1px 0 #d4e2f0;
}

.start {
	margin-right: 13px;
}

.task {
	display: flex;
	align-items: center;
	justify-content: center;
	width: 60px;
	height: 39px;
	margin-right: 2px;
	border: 1px solid transparent;
	border-radius: 3px;
}

.task.open {
	border-color: #4d6684;
	background: linear-gradient(160deg, #d8e4f2, #b3c7e0 50%, #bfd2e8);
	box-shadow: inset 0 0 0 1px #dfeaf6;
}

.tray {
	display: flex;
	align-items: center;
	align-self: stretch;
	gap: 9px;
	margin-left: auto;
	color: #fff;
}

.tray time {
	width: 60px;
	margin-left: 5px;
	font: 12px/17px Roboto, "Noto Sans", sans-serif;
	text-align: center;
}

.show-desktop {
	align-self: stretch;
	width: 14px;
	margin-left: -2px;
	border: 1px solid #4c5f75;
	background: linear-gradient(150deg, #9db1c6, #5f7790 60%, #8ba0b8);
}
```
